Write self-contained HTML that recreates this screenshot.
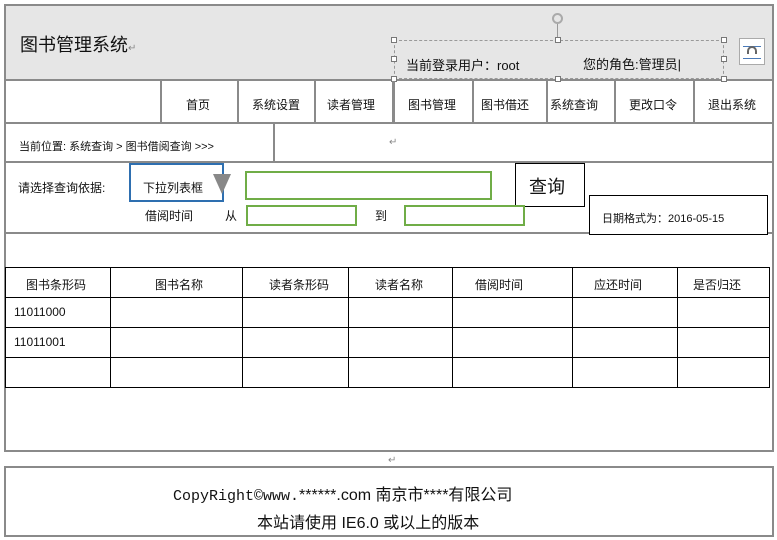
<!DOCTYPE html>
<html><head><meta charset="utf-8"><style>
*{margin:0;padding:0;box-sizing:border-box}
body{width:777px;height:540px;background:#fff;position:relative;overflow:hidden;font-family:"Liberation Sans","Noto Sans CJK SC",sans-serif;color:#111}
.a{position:absolute}
.hl{position:absolute;background:#8a8a8a}
.t{position:absolute;font-size:12px;white-space:nowrap}
.bl{position:absolute;background:#000}
</style></head><body>
<!-- header -->
<div class="a" style="left:4px;top:4px;width:770px;height:77px;background:#e6e6e6;border:2px solid #8a8a8a"></div>
<div class="t" style="left:20px;top:31px;font-size:18px">图书管理系统<span style="font-size:10px;color:#888">↵</span></div>
<div class="a" style="left:394px;top:40px;width:330px;height:39px;border:1px dashed #999"></div>
<div class="a" style="left:391px;top:37px;width:6px;height:6px;border:1px solid #777;background:#fff"></div>
<div class="a" style="left:555px;top:37px;width:6px;height:6px;border:1px solid #777;background:#fff"></div>
<div class="a" style="left:721px;top:37px;width:6px;height:6px;border:1px solid #777;background:#fff"></div>
<div class="a" style="left:391px;top:56px;width:6px;height:6px;border:1px solid #777;background:#fff"></div>
<div class="a" style="left:721px;top:56px;width:6px;height:6px;border:1px solid #777;background:#fff"></div>
<div class="a" style="left:391px;top:76px;width:6px;height:6px;border:1px solid #777;background:#fff"></div>
<div class="a" style="left:555px;top:76px;width:6px;height:6px;border:1px solid #777;background:#fff"></div>
<div class="a" style="left:721px;top:76px;width:6px;height:6px;border:1px solid #777;background:#fff"></div>
<div class="a" style="left:557px;top:23px;width:1px;height:14px;background:#999"></div>
<div class="a" style="left:552px;top:13px;width:11px;height:11px;border:2px solid #aaa;border-radius:50%"></div>
<div class="t" style="left:406px;top:55px;font-size:13px">当前登录用户：root</div>
<div class="t" style="left:583px;top:54px;font-size:13px">您的角色:管理员|</div>
<div class="a" style="left:739px;top:38px;width:26px;height:27px;border:1px solid #aaa;background:#fff"></div>
<div class="a" style="left:743px;top:46px;width:18px;height:13px;border-top:1px solid #4a7ab8;border-bottom:1px solid #4a7ab8"></div>
<div class="a" style="left:747px;top:46px;width:10px;height:8px;border:2px solid #666;border-bottom:none;border-radius:6px 6px 0 0"></div>
<!-- nav -->
<div class="a" style="left:4px;top:80px;width:770px;height:44px;border:2px solid #8a8a8a;border-top:none"></div>
<div class="hl" style="left:160px;top:81px;width:2px;height:42px"></div>
<div class="hl" style="left:237px;top:81px;width:2px;height:42px"></div>
<div class="hl" style="left:314px;top:81px;width:2px;height:42px"></div>
<div class="hl" style="left:392px;top:81px;width:3px;height:42px"></div>
<div class="hl" style="left:472px;top:81px;width:2px;height:42px"></div>
<div class="hl" style="left:546px;top:81px;width:2px;height:42px"></div>
<div class="hl" style="left:614px;top:81px;width:2px;height:42px"></div>
<div class="hl" style="left:693px;top:81px;width:2px;height:42px"></div>
<div class="t" style="left:186px;top:96px">首页</div>
<div class="t" style="left:252px;top:96px">系统设置</div>
<div class="t" style="left:327px;top:96px">读者管理</div>
<div class="t" style="left:408px;top:96px">图书管理</div>
<div class="t" style="left:481px;top:96px">图书借还</div>
<div class="t" style="left:550px;top:96px">系统查询</div>
<div class="t" style="left:629px;top:96px">更改口令</div>
<div class="t" style="left:708px;top:96px">退出系统</div>
<!-- breadcrumb -->
<div class="a" style="left:4px;top:122px;width:770px;height:41px;border:2px solid #8a8a8a;border-top:none"></div>
<div class="hl" style="left:273px;top:123px;width:2px;height:39px"></div>
<div class="t" style="left:19px;top:138px;font-size:11px">当前位置: 系统查询 &gt; 图书借阅查询 &gt;&gt;&gt;</div>
<div class="t" style="left:389px;top:137px;font-size:10px;color:#888">↵</div>
<!-- search -->
<div class="a" style="left:4px;top:161px;width:770px;height:73px;border:2px solid #8a8a8a;border-top:none"></div>
<div class="t" style="left:18px;top:179px">请选择查询依据:</div>
<div class="a" style="left:129px;top:163px;width:95px;height:39px;border:2px solid #2e6fb0"></div>
<div class="t" style="left:143px;top:179px">下拉列表框</div>
<div class="a" style="left:213px;top:174px;width:0;height:0;border-left:9px solid transparent;border-right:9px solid transparent;border-top:20px solid #888"></div>
<div class="a" style="left:245px;top:171px;width:247px;height:29px;border:2px solid #70ad47"></div>
<div class="a" style="left:515px;top:163px;width:70px;height:44px;border:1px solid #000;background:#fff"></div>
<div class="t" style="left:529px;top:173px;font-size:18px">查询</div>
<div class="t" style="left:145px;top:207px">借阅时间</div>
<div class="t" style="left:225px;top:207px">从</div>
<div class="a" style="left:246px;top:205px;width:111px;height:21px;border:2px solid #70ad47"></div>
<div class="t" style="left:375px;top:207px">到</div>
<div class="a" style="left:404px;top:205px;width:121px;height:21px;border:2px solid #70ad47"></div>
<div class="a" style="left:589px;top:195px;width:179px;height:40px;border:1px solid #000;background:#fff"></div>
<div class="t" style="left:602px;top:210px;font-size:11px">日期格式为：2016-05-15</div>
<!-- body area -->
<div class="a" style="left:4px;top:233px;width:770px;height:219px;border:2px solid #8a8a8a;border-top:none"></div>
<div class="a" style="left:5px;top:267px;width:765px;height:121px;border:1px solid #000"></div>
<div class="bl" style="left:5px;top:297px;width:765px;height:1px"></div>
<div class="bl" style="left:5px;top:327px;width:765px;height:1px"></div>
<div class="bl" style="left:5px;top:357px;width:765px;height:1px"></div>
<div class="bl" style="left:110px;top:267px;width:1px;height:121px"></div>
<div class="bl" style="left:242px;top:267px;width:1px;height:121px"></div>
<div class="bl" style="left:348px;top:267px;width:1px;height:121px"></div>
<div class="bl" style="left:452px;top:267px;width:1px;height:121px"></div>
<div class="bl" style="left:572px;top:267px;width:1px;height:121px"></div>
<div class="bl" style="left:677px;top:267px;width:1px;height:121px"></div>
<div class="t" style="left:26px;top:276px">图书条形码</div>
<div class="t" style="left:155px;top:276px">图书名称</div>
<div class="t" style="left:269px;top:276px">读者条形码</div>
<div class="t" style="left:375px;top:276px">读者名称</div>
<div class="t" style="left:475px;top:276px">借阅时间</div>
<div class="t" style="left:594px;top:276px">应还时间</div>
<div class="t" style="left:693px;top:276px">是否归还</div>
<div class="t" style="left:14px;top:305px">11011000</div>
<div class="t" style="left:14px;top:335px">11011001</div>
<!-- footer -->
<div class="a" style="left:4px;top:466px;width:770px;height:71px;border:2px solid #8a8a8a"></div>
<div class="t" style="left:388px;top:455px;font-size:10px;color:#888">↵</div>
<div class="t" style="left:173px;top:481px;font-size:16px"><span style="font-family:'Liberation Mono',monospace;font-size:15px">CopyRight©www.</span>******.com 南京市****有限公司</div>
<div class="t" style="left:257px;top:509px;font-size:16px">本站请使用 IE6.0 或以上的版本</div>
</body></html>
